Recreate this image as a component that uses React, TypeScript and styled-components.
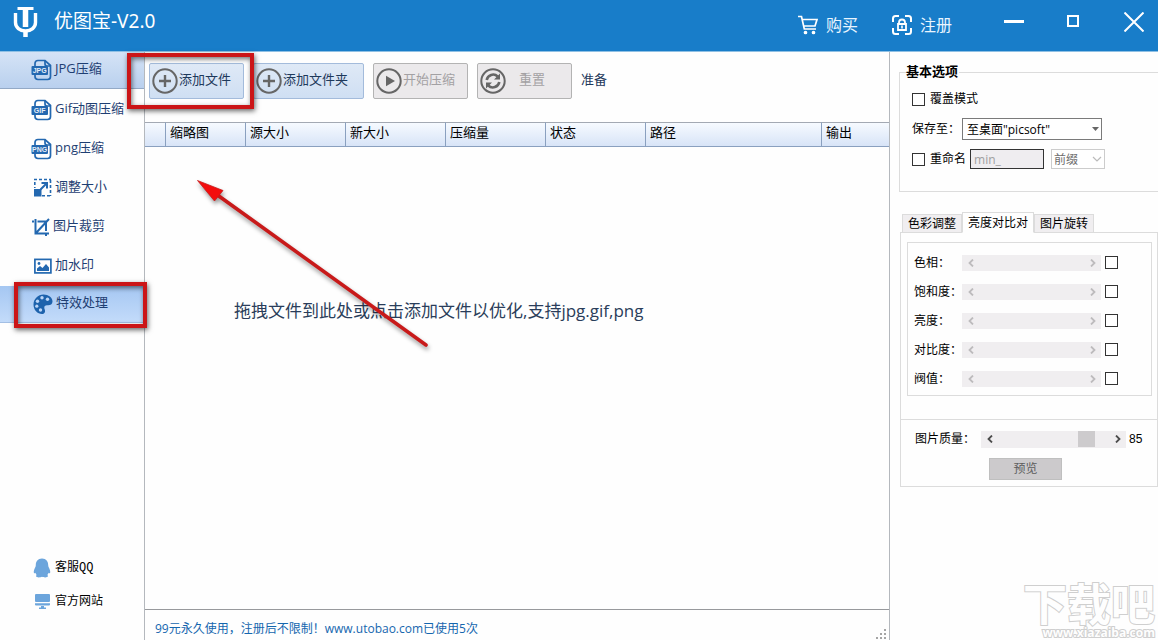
import React from "react";
import styled, { createGlobalStyle, css } from "styled-components";

const sans = `"Open Sans", "Noto Sans CJK SC", sans-serif`;
const song = `"Liberation Sans", "Noto Sans CJK SC", sans-serif`;

const GlobalStyle = createGlobalStyle`
  *, *::before, *::after { box-sizing: border-box; }
  body { margin: 0; background: #fefefe; font-family: ${sans}; font-size: 13px; color: #1e395b; }
  button, input, select { font-family: inherit; margin: 0; }
`;

const Window = styled.div`
  position: relative;
  display: flex;
  flex-direction: column;
  min-height: 100vh;
  overflow: hidden;
`;

const TitleBar = styled.header`
  display: flex;
  align-items: center;
  height: 52px;
  padding: 0 14px 8px 13px;
  background: #187dc9;
  border-bottom: 1px solid #8fc0e4;
  color: #fff;
`;

const Title = styled.h1`
  flex: 1;
  margin: 0 0 0 16px;
  padding-bottom: 2px;
  font: 400 19px/24px "Noto Sans", "Noto Sans CJK SC", sans-serif;
`;

const HeaderLink = styled.a`
  display: flex;
  align-items: center;
  gap: 8px;
  margin: 6px 34px 0 0;
  color: #e9f5ff;
  font-size: 16px;
  line-height: 20px;
  text-decoration: none;
`;

const WindowControls = styled.div`
  display: flex;
  align-items: center;
  gap: 40px;
  margin-left: 18px;
`;

const WindowButton = styled.button`
  display: flex;
  align-items: center;
  justify-content: center;
  width: 20px;
  height: 22px;
  padding: 0;
  border: 0;
  background: none;
  color: #fff;
`;

const Body = styled.div`
  flex: 1;
  display: flex;
`;

const Sidebar = styled.aside`
  display: flex;
  flex-direction: column;
  justify-content: space-between;
  flex: 0 0 145px;
  border-right: 1px solid #b4b8bd;
`;

const Nav = styled.nav`
  display: flex;
  flex-direction: column;
  gap: 2px;
`;

const NavItem = styled.a<{ $tone?: "light" | "strong" }>`
  position: relative;
  display: flex;
  align-items: center;
  gap: 2px;
  height: 37px;
  padding-left: 31px;
  color: #1f3f73;
  text-decoration: none;
  ${(p) =>
    p.$tone === "light" &&
    css`
      background: linear-gradient(#d5e3f6, #b9d0ee);
      border-bottom: 1px solid #93a9c6;
    `}
  ${(p) =>
    p.$tone === "strong" &&
    css`
      background: linear-gradient(#a5c7f2, #c3dbfa);
      border-bottom: 1px solid #a3bfe4;
    `}
  svg { flex: none; }
`;

const NavLabel = styled.span`
  padding-bottom: 4px;
  line-height: 20px;
  white-space: nowrap;
`;

const SupportLinks = styled.div`
  display: flex;
  flex-direction: column;
  gap: 14px;
  padding: 0 0 28px 32px;
`;

const SupportLink = styled.a`
  display: flex;
  align-items: center;
  gap: 3px;
  height: 20px;
  color: #000;
  font: 12px/20px "Liberation Mono", "Noto Sans CJK SC", monospace;
  text-decoration: none;
`;

const Main = styled.main`
  flex: 1;
  min-width: 0;
  display: flex;
  flex-direction: column;
  border-right: 1px solid #b4b8bd;
`;

const Toolbar = styled.div`
  display: flex;
  align-items: center;
  gap: 9px;
  height: 70px;
  padding: 0 4px 12px;
`;

const ToolSlot = styled.div`
  position: relative;
`;

const ToolButton = styled.button<{ $wide?: boolean }>`
  display: flex;
  align-items: center;
  gap: 1px;
  width: ${(p) => (p.$wide ? 111 : 95)}px;
  height: 36px;
  padding: 0 2px;
  border: 1px solid #a3bbdb;
  border-radius: 2px;
  background: linear-gradient(#dfe9f6, #cfdff3);
  color: #1e395b;
  font-size: 13px;
  white-space: nowrap;
  svg { flex: none; }
  &:disabled {
    border-color: #b3b3b3;
    background: #ebe9eb;
    color: #a3a1a3;
  }
`;

const ToolLabel = styled.span<{ $centered?: boolean }>`
  flex: ${(p) => (p.$centered ? 1 : "none")};
  padding: ${(p) => (p.$centered ? "0 12px 4px 0" : "0 0 4px")};
  line-height: 20px;
  text-align: center;
`;

const Highlight = styled.span<{ $around: "button" | "nav" }>`
  position: absolute;
  z-index: 2;
  inset: ${(p) => (p.$around === "button" ? "-10px -10px -10px -22px" : "-4px -3px -6px 14px")};
  border: 4px solid #cb1517;
  box-shadow: 1px 2px 5px rgba(0, 0, 0, 0.6), inset 1px 2px 5px rgba(0, 0, 0, 0.55);
  pointer-events: none;
`;

const FileTable = styled.table`
  width: 100%;
  table-layout: fixed;
  border-collapse: separate;
  border-spacing: 0;
  color: #000;
`;

const HeadCell = styled.th<{ $width?: number }>`
  width: ${(p) => (p.$width ? `${p.$width}px` : "auto")};
  height: 25px;
  padding: 0 4px 4px;
  border: solid #8aa0bf;
  border-width: 1px 1px 1px 0;
  border-top-color: #a3a9b3;
  background: linear-gradient(#f6faff, #d8e4f7);
  font-weight: 400;
  line-height: 19px;
  text-align: left;
  &:last-child { border-right: 0; }
`;

const DropArea = styled.section`
  position: relative;
  flex: 1;
  padding: 152px 0 0 89px;
`;

const DropHint = styled.p`
  margin: 0;
  font-size: 17px;
  line-height: 24px;
  color: #2a3d5a;
`;

const PointerArrow = styled.svg`
  position: absolute;
  top: 28px;
  left: 45px;
  overflow: visible;
  filter: drop-shadow(1px 3px 2px rgba(0, 0, 0, 0.4));
  pointer-events: none;
`;

const StatusBar = styled.footer`
  display: flex;
  align-items: flex-end;
  justify-content: space-between;
  height: 31px;
  padding-left: 10px;
  border-top: 1px solid #97999c;
  color: #1566ae;
  font-size: 12px;
  line-height: 23px;
`;

const Options = styled.aside`
  display: flex;
  flex-direction: column;
  flex: 0 0 268px;
  min-width: 0;
  padding: 10px 0 0 9px;
  color: #000;
  font: 12px/20px ${song};
`;

const BasicOptions = styled.fieldset`
  min-width: 0;
  margin: 0 0 20px;
  padding: 2px 0 17px 12px;
  border: solid #dcdcdc;
  border-width: 1px 0 1px 1px;
`;

const Legend = styled.legend`
  margin-left: -6px;
  padding: 0 1px 0 0;
  font-size: 13px;
  font-weight: 700;
`;

const OptionRow = styled.div`
  display: flex;
  align-items: center;
  height: 30px;
`;

const Check = styled.input.attrs({ type: "checkbox" })`
  appearance: none;
  flex: none;
  width: 13px;
  height: 13px;
  border: 1px solid #333;
  background: #fff;
`;

const CheckLabel = styled.label`
  display: flex;
  align-items: center;
  gap: 5px;
  margin-right: 4px;
`;

const FieldLabel = styled.label<{ $width: number }>`
  flex: 0 0 ${(p) => p.$width}px;
  min-width: 0;
  white-space: nowrap;
`;

const SelectBox = styled.span<{ $small?: boolean }>`
  position: relative;
  display: flex;
  width: ${(p) => (p.$small ? 54 : 140)}px;
  svg {
    position: absolute;
    top: 50%;
    right: 3px;
    transform: translateY(-50%);
    pointer-events: none;
  }
`;

const Select = styled.select`
  appearance: none;
  width: 100%;
  height: 22px;
  padding: 0 4px;
  border: 1px solid #7a7a7a;
  border-radius: 0;
  background: #fff;
  color: #000;
  font: 12px ${sans};
  &:disabled {
    height: 20px;
    padding: 0 2px;
    border-color: #cccccc;
    color: #6d6d6d;
    opacity: 1;
  }
`;

const PrefixInput = styled.input`
  width: 74px;
  height: 20px;
  margin-right: 7px;
  padding: 0 3px;
  border: 1px solid #333;
  background: #efedf0;
  color: #a0a0a0;
  font: 12px ${sans};
`;

const Tabs = styled.div`
  position: relative;
  display: flex;
  align-items: flex-end;
  height: 21px;
  margin: 0 0 -1px 1px;
  padding-left: 2px;
`;

const Tab = styled.button<{ $active?: boolean }>`
  height: ${(p) => (p.$active ? 21 : 19)}px;
  padding: 0 5px;
  border: 1px solid #dcdcdc;
  border-bottom-color: ${(p) => (p.$active ? "#fefefe" : "#dcdcdc")};
  background: ${(p) => (p.$active ? "#fefefe" : "#f0eef0")};
  color: #000;
  font-size: 12px;
  line-height: 16px;
`;

const AdjustPanel = styled.section`
  margin-left: 1px;
  padding: 9px 5px 23px 6px;
  border: 1px solid #dcdcdc;
`;

const AdjustGroup = styled.div`
  padding: 5px 33px 2px 6px;
  border: 1px solid #dcdcdc;
`;

const AdjustRow = styled.div`
  display: flex;
  align-items: center;
  height: 29px;
  ${Check} { margin-left: 4px; }
`;

const SliderBox = styled.div<{ $off?: boolean }>`
  flex: 1;
  display: flex;
  align-items: center;
  min-width: 0;
  height: ${(p) => (p.$off ? 16 : 17)}px;
  background: #f0eef0;
  color: ${(p) => (p.$off ? "#bdbbbd" : "#4c4c4c")};
`;

const StepButton = styled.button`
  display: flex;
  align-items: center;
  justify-content: center;
  flex: 0 0 17px;
  height: 16px;
  padding: 0;
  border: 0;
  background: none;
  color: inherit;
`;

const Range = styled.input.attrs({ type: "range" })`
  appearance: none;
  flex: 1;
  width: 0;
  min-width: 0;
  height: 16px;
  background: transparent;
  &::-webkit-slider-thumb {
    appearance: none;
    width: 17px;
    height: 16px;
    background: #cdcbcd;
  }
  &:disabled::-webkit-slider-thumb { background: transparent; }
`;

const QualityPanel = styled.section`
  margin-left: 1px;
  padding: 9px 0 6px;
  border: 1px solid #dcdcdc;
  border-top: 0;
`;

const QualityRow = styled.div`
  display: flex;
  align-items: center;
  height: 20px;
  margin-bottom: 9px;
  padding-left: 14px;
`;

const QualityValue = styled.output`
  flex: 0 0 28px;
  margin-left: 3px;
`;

const PreviewButton = styled.button`
  width: 73px;
  height: 22px;
  margin-left: 88px;
  padding: 0;
  border: 1px solid #bfbfbf;
  background: #cccacc;
  color: #5d5d5d;
  font-size: 12px;
  line-height: 18px;
`;

const Watermark = styled.div`
  position: absolute;
  right: 3px;
  bottom: 0;
  display: flex;
  flex-direction: column;
  align-items: flex-end;
  color: #fefefe;
  paint-order: stroke fill;
  -webkit-text-stroke: 2px #cfcfcf;
  font-weight: 700;
  pointer-events: none;
`;

const WatermarkName = styled.span`
  font-size: 44px;
  line-height: 44px;
`;

const WatermarkSite = styled.span`
  font-size: 12px;
  line-height: 14px;
`;

const Logo = () => (
  <svg width="25" height="32" viewBox="0 0 25 32" fill="none" stroke="#fff">
    <path d="M4.500 2.500h16" strokeWidth="3" />
    <path d="M12.500 3v18" strokeWidth="5.500" />
    <path d="M2.500 7v9.500c0 5 4.300 8.500 10 8.500s10-3.500 10-8.500V7" strokeWidth="3.400" />
    <path d="M12.500 25v6" strokeWidth="4.500" />
  </svg>
);

const CartIcon = () => (
  <svg width="20" height="20" viewBox="0 0 20 20" fill="none" stroke="#fff" strokeWidth="1.7">
    <path d="M0 1.500h3.500L6.300 14H18M4.300 4.500H19L17 11H5.800" />
    <circle cx="7.500" cy="17.500" r="1" fill="#fff" />
    <circle cx="15.500" cy="17.500" r="1" fill="#fff" />
  </svg>
);

const LockIcon = () => (
  <svg width="20" height="20" viewBox="0 0 20 20" fill="none" stroke="#fff" strokeWidth="2">
    <path d="M1 7V3.500Q1 1 3.500 1H7M13 1h3.500Q19 1 19 3.500V7M19 13v3.500q0 2.500-2.500 2.500H13M7 19H3.500Q1 19 1 16.500V13" />
    <path d="M7 9V7.500a3 3 0 0 1 6 0V9" strokeWidth="1.800" />
    <path d="M6 9h8v6H6z" strokeWidth="1.800" />
    <path d="M10 10.500v3" strokeWidth="1.600" />
  </svg>
);

const FormatIcon = ({ label }: { label: string }) => (
  <svg width="22" height="22" viewBox="0 0 22 22" fill="none" stroke="#2368b0" strokeWidth="1.700">
    <path d="M4 7V4.500Q4 1.500 7 1.500h7l5.500 5v11q0 3-3 3H7q-3 0-3-3V16" />
    <path d="M14 1.500V5q0 2 2 2h3.500" />
    <rect x="0.500" y="7" width="16.500" height="9" rx="1" fill="#2368b0" stroke="none" />
    <text x="8.700" y="14" textAnchor="middle" fontSize="7" fontWeight="700" fontFamily="Liberation Sans, sans-serif" fill="#e4edf8" stroke="none">
      {label}
    </text>
  </svg>
);

const ResizeIcon = () => (
  <svg width="22" height="22" viewBox="0 0 22 22" fill="none" stroke="#2368b0" strokeWidth="1.600">
    <path d="M3 2.500h17" strokeDasharray="3 2" />
    <path d="M3.800 5v6M19.500 3v16M11 18.800h9" strokeDasharray="3 2" />
    <path d="M3 12h7.500v7.500H3z" fill="#2368b0" stroke="none" />
    <path d="M9.500 12.500L15.500 6.500M10.500 6h5.500v5.500" strokeWidth="2" />
  </svg>
);

const CropIcon = () => (
  <svg width="20" height="22" viewBox="0 0 20 22" fill="none" stroke="#2368b0" strokeWidth="2">
    <path d="M1 5.500h2M4.500 3v14.500H18M6.500 5.500H15v9.500M15 17.500v2.500M5 17L18 3" />
  </svg>
);

const PictureIcon = () => (
  <svg width="22" height="22" viewBox="0 0 22 22">
    <rect x="3.900" y="4.400" width="16" height="13.500" fill="none" stroke="#2368b0" strokeWidth="1.700" />
    <path d="M6 16v-2.500l3-2.500 2.500 2 3.500-4 3 3.500V16z" fill="#2368b0" />
    <circle cx="8" cy="8.500" r="1.400" fill="#2368b0" />
  </svg>
);

const PaletteIcon = () => (
  <svg width="23" height="22" viewBox="0 0 23 22">
    <path
      d="M12.500 1.500c5 0 9 3 9 7 0 3-2.500 4-5 3.800-2-.2-3.500.7-3.200 2.700.2 1.500 1 2.200.7 3.700-.3 1.700-1.700 2.300-3 2.300C6.500 21 2.500 17 2.500 11.500S7 1.500 12.500 1.500z"
      fill="#1d62ac"
    />
    <g fill="#bcd5f6">
      <circle cx="11" cy="4.800" r="1.700" />
      <circle cx="16.500" cy="6.300" r="1.700" />
      <circle cx="6.500" cy="8.300" r="1.700" />
      <circle cx="5.800" cy="13.200" r="1.600" />
      <circle cx="9.500" cy="17" r="1.700" />
    </g>
  </svg>
);

const PenguinIcon = () => (
  <svg width="20" height="20" viewBox="0 0 20 20" fill="#6ca5dc">
    <path d="M10 0.500c4.200 0 6.200 3 6.200 6.700 0 1 .4 1.800.9 2.800.8 1.700 1.300 3.200 1.100 4.500-.1 1-.9.900-1.700.2-.3 1.200-.6 1.700-1.200 2.300.7.500.9 1 .6 1.600-.4 1-4.400 1-5.900.2-1.500.8-5.500.8-5.900-.2-.3-.6-.1-1.100.6-1.600-.6-.6-.9-1.100-1.200-2.300-.8.700-1.600.8-1.700-.2-.2-1.300.3-2.800 1.100-4.500.5-1 .9-1.800.9-2.800C3.800 3.500 5.800.5 10 .5z" />
  </svg>
);

const MonitorIcon = () => (
  <svg width="20" height="20" viewBox="0 0 20 20" fill="#6ca5dc">
    <rect x="3" y="2" width="15" height="8" rx="1" />
    <path d="M3 11.200h15v1.300q0 1-1 1H4q-1 0-1-1zM9 14h3v1.500h2V17H7v-1.500h2z" />
  </svg>
);

const PlusCircle = () => (
  <svg width="26" height="26" viewBox="0 0 26 26" fill="none" stroke="#666" strokeWidth="2">
    <circle cx="13" cy="13" r="11.700" />
    <path d="M13 7v12M7 13h12" strokeWidth="2.400" />
  </svg>
);

const PlayCircle = () => (
  <svg width="26" height="26" viewBox="0 0 26 26">
    <circle cx="13" cy="13" r="11.700" fill="none" stroke="#666" strokeWidth="2" />
    <path d="M10 7.800L19 13l-9 5.200z" fill="#666" />
  </svg>
);

const RefreshCircle = () => (
  <svg width="26" height="26" viewBox="0 0 26 26" fill="none" stroke="#666" strokeWidth="2">
    <circle cx="13" cy="13" r="11.700" />
    <path d="M6.700 12a6.500 6.500 0 0 1 11-3.500M19.300 14a6.500 6.500 0 0 1-11 3.500" strokeWidth="2.600" />
    <path d="M20 5.500v6h-6zM6 20.500v-6h6z" fill="#666" stroke="none" />
  </svg>
);

const Chevron = ({ back }: { back?: boolean }) => (
  <svg width="8" height="8" viewBox="0 0 8 8" fill="none" stroke="currentColor" strokeWidth="1.800">
    <path d={back ? "M6 0.500L2.500 4L6 7.500" : "M2 0.500L5.500 4L2 7.500"} />
  </svg>
);

const GripIcon = () => (
  <svg width="13" height="12" viewBox="0 0 13 12" fill="#a5a5a5">
    <path d="M8 1h2v2H8zM8 5h2v2H8zM4 5h2v2H4zM8 9h2v2H8zM4 9h2v2H4zM0 9h2v2H0z" />
  </svg>
);

const tools = [
  { label: "Gif动图压缩", icon: <FormatIcon label="GIF" /> },
  { label: "png压缩", icon: <FormatIcon label="PNG" /> },
  { label: "调整大小", icon: <ResizeIcon /> },
  { label: "图片裁剪", icon: <CropIcon /> },
  { label: "加水印", icon: <PictureIcon /> },
];

const columns = [
  { name: "", width: 21 },
  { name: "缩略图", width: 80 },
  { name: "源大小", width: 100 },
  { name: "新大小", width: 100 },
  { name: "压缩量", width: 100 },
  { name: "状态", width: 100 },
  { name: "路径" },
  { name: "输出", width: 67 },
];

const adjustments = ["色相", "饱和度", "亮度", "对比度", "阀值"];

type SliderProps = { id: string; name: string; value: number; off?: boolean };

const Slider = ({ id, name, value, off }: SliderProps) => (
  <SliderBox $off={off}>
    <StepButton aria-label={`${name}减小`} disabled={off}>
      <Chevron back />
    </StepButton>
    <Range id={id} defaultValue={value} disabled={off} />
    <StepButton aria-label={`${name}增大`} disabled={off}>
      <Chevron />
    </StepButton>
  </SliderBox>
);

export default function App() {
  return (
    <>
      <GlobalStyle />
      <Window>
        <TitleBar>
          <Logo />
          <Title>优图宝-V2.0</Title>
          <HeaderLink href="#buy">
            <CartIcon />
            购买
          </HeaderLink>
          <HeaderLink href="#register">
            <LockIcon />
            注册
          </HeaderLink>
          <WindowControls>
            <WindowButton aria-label="最小化">
              <svg width="20" height="20" viewBox="0 0 20 20">
                <path d="M0 9.500h20" stroke="#fff" strokeWidth="3" />
              </svg>
            </WindowButton>
            <WindowButton aria-label="最大化">
              <svg width="20" height="20" viewBox="0 0 20 20">
                <path d="M4 4h10v10H4z" fill="none" stroke="#fff" strokeWidth="2" />
              </svg>
            </WindowButton>
            <WindowButton aria-label="关闭">
              <svg width="20" height="20" viewBox="0 0 20 20">
                <path d="M0.500 0.500l19 19M19.500 0.500l-19 19" stroke="#fff" strokeWidth="2" />
              </svg>
            </WindowButton>
          </WindowControls>
        </TitleBar>

        <Body>
          <Sidebar>
            <Nav>
              <NavItem href="#jpg" $tone="light">
                <FormatIcon label="JPG" />
                <NavLabel>JPG压缩</NavLabel>
              </NavItem>
              {tools.map((item) => (
                <NavItem href="#tool" key={item.label}>
                  {item.icon}
                  <NavLabel>{item.label}</NavLabel>
                </NavItem>
              ))}
              <NavItem href="#effects" $tone="strong">
                <PaletteIcon />
                <NavLabel>特效处理</NavLabel>
                <Highlight $around="nav" />
              </NavItem>
            </Nav>
            <SupportLinks>
              <SupportLink href="#qq">
                <PenguinIcon />
                客服QQ
              </SupportLink>
              <SupportLink href="#site">
                <MonitorIcon />
                官方网站
              </SupportLink>
            </SupportLinks>
          </Sidebar>

          <Main>
            <Toolbar>
              <ToolSlot>
                <ToolButton>
                  <PlusCircle />
                  <ToolLabel>添加文件</ToolLabel>
                </ToolButton>
                <Highlight $around="button" />
              </ToolSlot>
              <ToolButton $wide>
                <PlusCircle />
                <ToolLabel>添加文件夹</ToolLabel>
              </ToolButton>
              <ToolButton disabled>
                <PlayCircle />
                <ToolLabel>开始压缩</ToolLabel>
              </ToolButton>
              <ToolButton disabled>
                <RefreshCircle />
                <ToolLabel $centered>重置</ToolLabel>
              </ToolButton>
              <ToolLabel>准备</ToolLabel>
            </Toolbar>
            <FileTable>
              <thead>
                <tr>
                  {columns.map((column, index) => (
                    <HeadCell key={index} $width={column.width}>
                      {column.name}
                    </HeadCell>
                  ))}
                </tr>
              </thead>
            </FileTable>
            <DropArea>
              <DropHint>拖拽文件到此处或点击添加文件以优化,支持jpg.gif,png</DropHint>
              <PointerArrow width="240" height="176" viewBox="190 175 240 176">
                <path d="M216 194L426 345" stroke="#c81a1a" strokeWidth="3.600" strokeLinecap="round" />
                <path d="M197.500 180.500L223 190.500L214.500 201z" fill="#f30d0d" stroke="#c81a1a" strokeWidth="0.800" />
              </PointerArrow>
            </DropArea>
            <StatusBar>
              <span>99元永久使用，注册后不限制！www.utobao.com已使用5次</span>
              <GripIcon />
            </StatusBar>
          </Main>

          <Options>
            <BasicOptions>
              <Legend>基本选项</Legend>
              <OptionRow>
                <CheckLabel>
                  <Check />
                  覆盖模式
                </CheckLabel>
              </OptionRow>
              <OptionRow>
                <FieldLabel $width={50} htmlFor="target">保存至：</FieldLabel>
                <SelectBox>
                  <Select id="target">
                    <option>至桌面"picsoft"</option>
                  </Select>
                  <svg width="7" height="4" viewBox="0 0 7 4">
                    <path d="M0 0h7L3.500 4z" fill="#666" />
                  </svg>
                </SelectBox>
              </OptionRow>
              <OptionRow>
                <CheckLabel>
                  <Check />
                  重命名
                </CheckLabel>
                <PrefixInput aria-label="重命名文字" defaultValue="min_" disabled />
                <SelectBox $small>
                  <Select aria-label="重命名位置" disabled>
                    <option>前缀</option>
                  </Select>
                  <svg width="10" height="6" viewBox="0 0 10 6">
                    <path d="M1 1l4 4 4-4" fill="none" stroke="#bbb" strokeWidth="1.200" />
                  </svg>
                </SelectBox>
              </OptionRow>
            </BasicOptions>

            <Tabs role="tablist">
              <Tab role="tab">色彩调整</Tab>
              <Tab role="tab" aria-selected $active>亮度对比对</Tab>
              <Tab role="tab">图片旋转</Tab>
            </Tabs>
            <AdjustPanel>
              <AdjustGroup>
                {adjustments.map((name, index) => (
                  <AdjustRow key={name}>
                    <FieldLabel $width={48} htmlFor={`adjust-${index}`}>{name}：</FieldLabel>
                    <Slider id={`adjust-${index}`} name={name} value={0} off />
                    <Check aria-label={`启用${name}`} />
                  </AdjustRow>
                ))}
              </AdjustGroup>
            </AdjustPanel>
            <QualityPanel>
              <QualityRow>
                <FieldLabel $width={66} htmlFor="quality">图片质量：</FieldLabel>
                <Slider id="quality" name="图片质量" value={85} />
                <QualityValue htmlFor="quality">85</QualityValue>
              </QualityRow>
              <PreviewButton>预览</PreviewButton>
            </QualityPanel>
          </Options>
        </Body>

        <Watermark>
          <WatermarkName>下载吧</WatermarkName>
          <WatermarkSite>www.xiazaiba.com</WatermarkSite>
        </Watermark>
      </Window>
    </>
  );
}
